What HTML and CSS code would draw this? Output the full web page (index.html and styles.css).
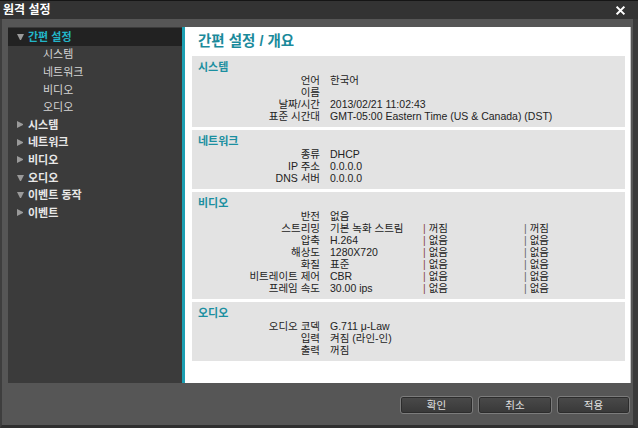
FILE: index.html
```html
<!DOCTYPE html>
<html lang="ko">
<head>
<meta charset="utf-8">
<title>원격 설정</title>
<link rel="stylesheet" href="styles.css">
</head>
<body>
<div class="titlebar">
  <span class="title">원격 설정</span>
  <svg class="close" viewBox="0 0 10 10"><path d="M1.5 1.5L8.5 8.5M8.5 1.5L1.5 8.5" stroke="#fff" stroke-width="2.2" stroke-linecap="square"/></svg>
</div>
<div class="frame">
  <div class="main">
    <div class="sidebar">
      <div class="item sel"><span class="tri down"></span>간편 설정</div>
      <div class="item sub">시스템</div>
      <div class="item sub">네트워크</div>
      <div class="item sub">비디오</div>
      <div class="item sub">오디오</div>
      <div class="item"><span class="tri right"></span>시스템</div>
      <div class="item"><span class="tri right"></span>네트워크</div>
      <div class="item"><span class="tri right"></span>비디오</div>
      <div class="item"><span class="tri down"></span>오디오</div>
      <div class="item"><span class="tri down"></span>이벤트 동작</div>
      <div class="item"><span class="tri right"></span>이벤트</div>
    </div>
    <div class="accent"></div>
    <div class="content">
      <div class="heading">간편 설정 / 개요</div>
      <div class="sec">
        <h3>시스템</h3>
        <div class="grid">
          <div class="l">언어</div><div class="w">한국어</div>
          <div class="l">이름</div><div class="w">&nbsp;</div>
          <div class="l">날짜/시간</div><div class="w">2013/02/21 11:02:43</div>
          <div class="l">표준 시간대</div><div class="w">GMT-05:00 Eastern Time (US &amp; Canada) (DST)</div>
        </div>
      </div>
      <div class="sec">
        <h3>네트워크</h3>
        <div class="grid">
          <div class="l">종류</div><div class="w">DHCP</div>
          <div class="l">IP 주소</div><div class="w">0.0.0.0</div>
          <div class="l">DNS 서버</div><div class="w">0.0.0.0</div>
        </div>
      </div>
      <div class="sec">
        <h3>비디오</h3>
        <div class="grid">
          <div class="l">반전</div><div class="w">없음</div>
          <div class="l">스트리밍</div><div>기본 녹화 스트림</div><div><span class="p1">|</span> 꺼짐</div><div><span class="p2">|</span> 꺼짐</div>
          <div class="l">압축</div><div>H.264</div><div><span class="p1">|</span> 없음</div><div><span class="p2">|</span> 없음</div>
          <div class="l">해상도</div><div>1280X720</div><div><span class="p1">|</span> 없음</div><div><span class="p2">|</span> 없음</div>
          <div class="l">화질</div><div>표준</div><div><span class="p1">|</span> 없음</div><div><span class="p2">|</span> 없음</div>
          <div class="l">비트레이트 제어</div><div>CBR</div><div><span class="p1">|</span> 없음</div><div><span class="p2">|</span> 없음</div>
          <div class="l">프레임 속도</div><div>30.00 ips</div><div><span class="p1">|</span> 없음</div><div><span class="p2">|</span> 없음</div>
        </div>
      </div>
      <div class="sec">
        <h3>오디오</h3>
        <div class="grid">
          <div class="l">오디오 코덱</div><div class="w">G.711 μ-Law</div>
          <div class="l">입력</div><div class="w">켜짐 (라인-인)</div>
          <div class="l">출력</div><div class="w">꺼짐</div>
        </div>
      </div>
    </div>
  </div>
  <div class="footer">
    <button class="btn w73">확인</button>
    <button class="btn w74">취소</button>
    <button class="btn w73">적용</button>
  </div>
</div>
</body>
</html>
```
FILE: styles.css
```css
* { box-sizing: border-box; margin: 0; padding: 0; }
html, body { width: 638px; height: 428px; overflow: hidden; }
body {
  background: #555;
  font-family: "Liberation Sans", "Noto Sans CJK KR", sans-serif;
  font-size: 10.5px;
  display: flex;
  flex-direction: column;
}
.titlebar {
  height: 19px;
  flex: none;
  background: #333;
  border-top: 1px solid #151515;
  display: flex;
  align-items: center;
  justify-content: space-between;
  padding: 0 13px 0 3px;
  color: #fff;
  font-weight: bold;
  font-size: 12px;
  line-height: 14px;
}
.close { width: 9px; height: 9px; display: block; }
.frame {
  flex: 1;
  display: flex;
  flex-direction: column;
  border-left: 2px solid #3e3e3e;
  border-right: 5px solid #3a3a3a;
  border-bottom: 3px solid #2f2f2f;
  background: #565656;
}
.main { display: flex; height: 364px; flex: none; padding: 8px 2px 0 6px; }
.sidebar { width: 174px; background: #3b3b3b; padding-top: 1px; }
.accent { width: 3px; background: #1c9fb2; }
.content {
  flex: 1;
  background: #fff;
  border-right: 1px solid #c4c4c4;
  padding: 0 5px 0 7px;
}
.item {
  height: 17.6px;
  display: flex;
  align-items: center;
  padding-left: 9px;
  color: #e8e8e8;
  font-weight: bold;
  font-size: 11px;
  line-height: 14px;
}
.item.sel { background: #222; color: #22b5c8; }
.item.sub { padding-left: 35px; font-weight: normal; color: #d4d4d4; }
.tri { width: 6px; height: 6px; margin-right: 5px; display: inline-block; }
.tri.down {
  border-left: 3.5px solid transparent;
  border-right: 3.5px solid transparent;
  border-top: 6px solid #9a9a9a;
  width: 7px;
  margin-right: 4px;
}
.tri.right {
  border-top: 3.5px solid transparent;
  border-bottom: 3.5px solid transparent;
  border-left: 6px solid #9a9a9a;
  height: 7px;
}
.heading {
  height: 29px;
  padding: 6px 0 0 6px;
  line-height: 17px;
  font-size: 14.5px;
  font-weight: bold;
  color: #1b8a9b;
}
.sec { background: #e3e3e3; padding: 4px 0 5px; margin-bottom: 3px; }
.sec h3 {
  font-size: 11px;
  font-weight: bold;
  color: #1b8fa0;
  line-height: 14px;
  padding-left: 6px;
}
.grid {
  display: grid;
  grid-template-columns: 138px 93px 101px 1fr;
  line-height: 12px;
  color: #222;
  white-space: nowrap;
}
.grid .l { text-align: right; padding-right: 10px; }
.grid .w { grid-column: 2 / -1; }
.p1 { color: #8a4848; }
.p2 { color: #666; }
.footer {
  flex: 1;
  display: flex;
  justify-content: flex-end;
  align-items: flex-start;
  gap: 5px;
  padding: 13px 3px 0 0;
}
.btn {
  height: 18px;
  background: linear-gradient(#4a4a4a, #383838);
  border: 1px solid #7c7c7c;
  border-radius: 3px;
  box-shadow: inset 0 0 0 1px #2c2c2c;
  color: #e2e2e2;
  font-family: "Liberation Sans", "Noto Sans CJK KR", sans-serif;
  font-size: 10.5px;
  line-height: 14px;
}
.w73 { width: 73px; }
.w74 { width: 74px; }
```
